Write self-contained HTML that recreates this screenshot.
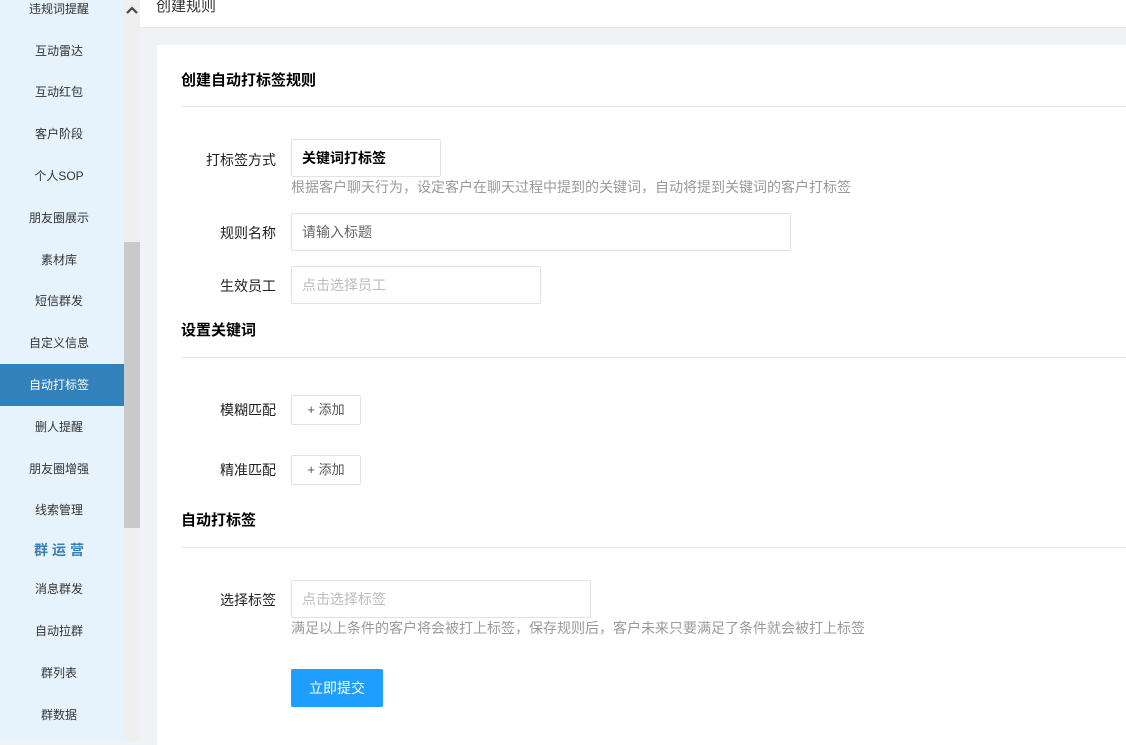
<!DOCTYPE html><html><head><meta charset="utf-8"><style>
*{margin:0;padding:0;box-sizing:border-box}
body{width:1126px;height:741px;overflow:hidden;background:#f0f2f5;font-family:"Liberation Sans","Noto Sans CJK SC",sans-serif;font-size:14px;color:#333;position:relative}
.a{position:absolute}
.side{left:0;top:0;width:124px;height:741px;background:#e6f3fd}
.it{position:absolute;left:0;width:118px;text-align:center;font-size:12px;color:#333;line-height:20px}
.act{background:#3381ba;color:#fff;height:42px;line-height:42px;width:124px;padding-right:6px}
.sb{left:124px;top:0;width:16px;height:741px;background:#efefef}
.th{left:124px;top:242px;width:16px;height:286px;background:#c9c9c9}
.hd{left:140px;top:0;width:986px;height:28px;background:#fff;border-bottom:1px solid #e6e6e6}
.card{left:157px;top:45px;width:969px;height:700px;background:#fff}
.t{font-weight:bold;color:#000;font-size:15px}
.hr{height:1px;background:#e8e8e8;left:181px;width:945px}
.lb{width:95px;text-align:right;left:181px;font-size:14px;color:#222}
.in{border:1px solid #e2e2e2;border-radius:2px;font-size:14px;padding-left:10px;background:#fff}
.tip{color:#999;font-size:14px}
.btn{border:1px solid #e2e2e2;border-radius:2px;color:#555;text-align:center;font-size:13px;width:70px;height:30px;line-height:28px}
</style></head><body>
<div class="a side">
<div class="it" style="top:-1px">违规词提醒</div>
<div class="it" style="top:41px">互动雷达</div>
<div class="it" style="top:82px">互动红包</div>
<div class="it" style="top:124px">客户阶段</div>
<div class="it" style="top:166px">个人SOP</div>
<div class="it" style="top:208px">朋友圈展示</div>
<div class="it" style="top:250px">素材库</div>
<div class="it" style="top:291px">短信群发</div>
<div class="it" style="top:333px">自定义信息</div>
<div class="it act" style="top:364px">自动打标签</div>
<div class="it" style="top:417px">删人提醒</div>
<div class="it" style="top:459px">朋友圈增强</div>
<div class="it" style="top:500px">线索管理</div>
<div class="it" style="top:540px;color:#3a80b8;font-weight:bold;font-size:14px;letter-spacing:4px;padding-left:4px">群运营</div>
<div class="it" style="top:579px">消息群发</div>
<div class="it" style="top:621px">自动拉群</div>
<div class="it" style="top:663px">群列表</div>
<div class="it" style="top:705px">群数据</div>
</div>
<div class="a sb"></div><div class="a th"></div>
<svg class="a" style="left:125px;top:4px" width="14" height="12" viewBox="0 0 14 12"><path d="M2 9 L7 4 L12 9" stroke="#444" stroke-width="2.2" fill="none"/></svg>
<div class="a hd"><div class="a" style="left:16px;top:-5px;font-size:15px;color:#333">创建规则</div></div>
<div class="a card"></div>
<div class="a t" style="left:181px;top:69px">创建自动打标签规则</div>
<div class="a hr" style="top:106px"></div>
<div class="a lb" style="top:150px">打标签方式</div>
<div class="a in" style="left:291px;top:139px;width:150px;height:38px;line-height:36px;font-weight:bold;color:#000">关键词打标签</div>
<div class="a tip" style="left:291px;top:177px">根据客户聊天行为，设定客户在聊天过程中提到的关键词，自动将提到关键词的客户打标签</div>
<div class="a lb" style="top:223px">规则名称</div>
<div class="a in" style="left:291px;top:213px;width:500px;height:38px;line-height:36px;color:#666">请输入标题</div>
<div class="a lb" style="top:276px">生效员工</div>
<div class="a in" style="left:291px;top:266px;width:250px;height:38px;line-height:36px;color:#bbb">点击选择员工</div>
<div class="a t" style="left:181px;top:319px">设置关键词</div>
<div class="a hr" style="top:357px"></div>
<div class="a lb" style="top:400px">模糊匹配</div>
<div class="a btn" style="left:291px;top:395px">+ 添加</div>
<div class="a lb" style="top:460px">精准匹配</div>
<div class="a btn" style="left:291px;top:455px">+ 添加</div>
<div class="a t" style="left:181px;top:509px">自动打标签</div>
<div class="a hr" style="top:547px"></div>
<div class="a lb" style="top:590px">选择标签</div>
<div class="a in" style="left:291px;top:580px;width:300px;height:38px;line-height:36px;color:#bbb">点击选择标签</div>
<div class="a tip" style="left:291px;top:618px">满足以上条件的客户将会被打上标签，保存规则后，客户未来只要满足了条件就会被打上标签</div>
<div class="a" style="left:291px;top:669px;width:92px;height:38px;line-height:38px;background:#1e9fff;color:#fff;text-align:center;border-radius:2px;font-size:14px">立即提交</div>
</body></html>
